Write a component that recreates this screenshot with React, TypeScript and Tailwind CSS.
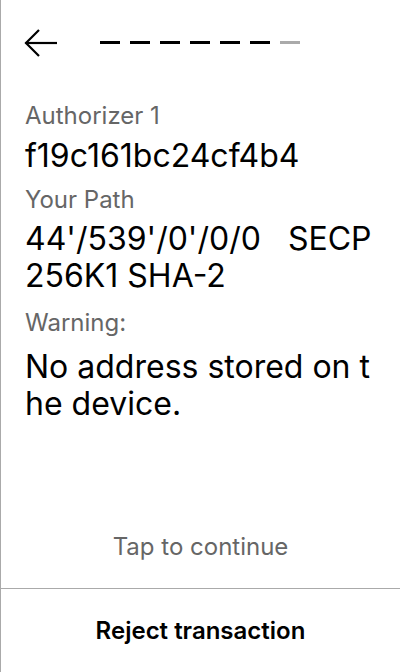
export default function App() {
  const dashes = [true, true, true, true, true, true, false]

  return (
    <div
      className="h-[672px] w-[400px] flex flex-col bg-white border-l border-[#aaaaaa] text-black"
      style={{ fontFamily: 'Inter, "Noto Sans", sans-serif' }}
    >
      <div className="h-[100px] flex items-start pt-[29px] pl-[23px]">
        <svg width="34" height="28" viewBox="0 0 34 28" fill="none" stroke="black" strokeWidth="2.2">
          <path d="M1.5 14 H33" />
          <path d="M15 1 L2 14 L15 27" />
        </svg>
        <div className="flex gap-[10px] ml-[42px] mt-[12px]">
          {dashes.map((on, i) => (
            <span key={i} className={on ? 'w-[20px] h-[3px] bg-black' : 'w-[20px] h-[3px] bg-[#aaaaaa]'} />
          ))}
        </div>
      </div>

      <div className="px-[24px]">
        <p className="text-[24px] leading-[32px] text-[#666666]">Authorizer 1</p>
        <p className="text-[32px] leading-[37px] mt-[5px]">f19c161bc24cf4b4</p>
        <p className="text-[24px] leading-[32px] text-[#666666] mt-[10px]">Your Path</p>
        <p className="text-[32px] leading-[37px] mt-[4px] whitespace-pre">
          {"44'/539'/0'/0/0   SECP"}
          <br />
          {'256K1 SHA-2'}
        </p>
        <p className="text-[24px] leading-[32px] text-[#666666] mt-[13px]">Warning:</p>
        <p className="text-[32px] leading-[37px] mt-[9px]">
          No address stored on t
          <br />
          he device.
        </p>
      </div>

      <div className="flex-1" />

      <p className="text-center text-[24px] leading-[32px] text-[#666666] pb-[25px]">Tap to continue</p>
      <div className="h-[84px] border-t border-[#aaaaaa] flex items-center justify-center">
        <span className="text-[24px] font-semibold">Reject transaction</span>
      </div>
    </div>
  )
}
